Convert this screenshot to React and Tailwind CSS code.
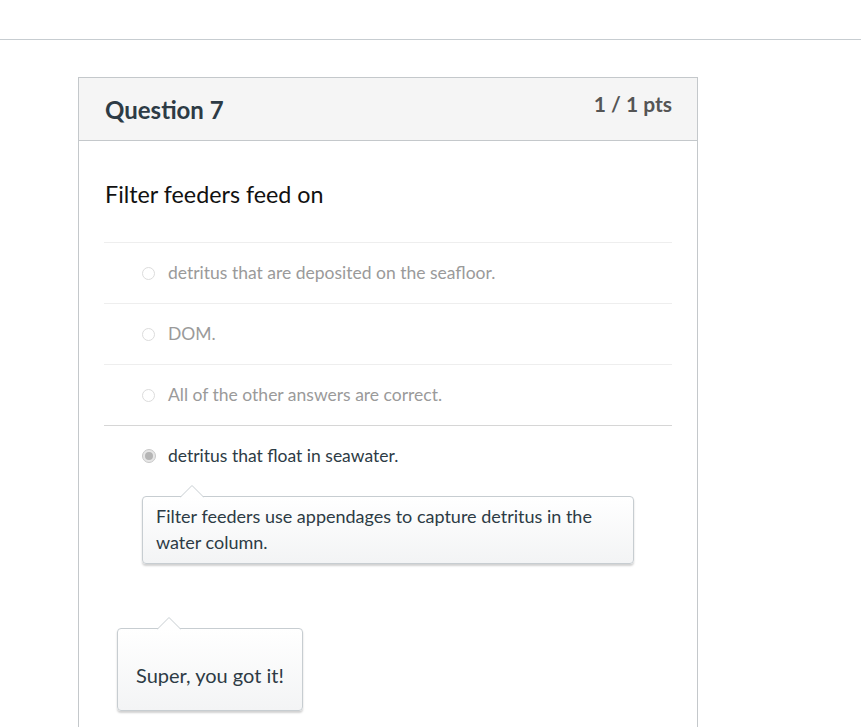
export default function App() {
  const answers = [
    { text: "detritus that are deposited on the seafloor.", selected: false },
    { text: "DOM.", selected: false },
    { text: "All of the other answers are correct.", selected: false },
  ];
  return (
    <div className="min-h-[727px] bg-white" style={{ fontFamily: "Lato, 'Noto Sans', sans-serif" }}>
      <div className="h-[40px] border-b border-[#c7cdd1]" />
      <div className="pt-[37px] pl-[78px]">
        <div className="w-[620px] border border-[#c4c8cb] border-b-0 h-[650px]">
          <div className="h-[63px] bg-[#f5f5f5] border-b border-[#c4c8cb] flex justify-between pl-[26px] pr-[25px]">
            <div className="pt-[16px] text-[24px] font-bold text-[#2d3b45] leading-[32px]">Question 7</div>
            <div className="pt-[12px] text-[21px] font-bold text-[#555] leading-[28px]">1 / 1 pts</div>
          </div>
          <div className="px-[25px]">
            <div className="pt-[38px] pb-[32px] pl-[1px] text-[23.3px] text-[#111] leading-[31px]">Filter feeders feed on</div>
            {answers.map((a, i) => (
              <div key={i} className="h-[61px] border-t border-[#eeeeee] flex items-center pl-[38px]">
                <span className="w-[13px] h-[13px] rounded-full border border-[#dcdcdc] bg-white" />
                <span className="ml-[13px] text-[17.5px] text-[#9a9a9a]">{a.text}</span>
              </div>
            ))}
            <div className="border-t border-[#d6d6d6]">
              <div className="h-[60px] flex items-center pl-[38px]">
                <span className="w-[14px] h-[14px] rounded-full border border-[#c8c8c8] bg-[#e6e6e6] flex items-center justify-center">
                  <span className="w-[8px] h-[8px] rounded-full bg-[#b5b5b5]" />
                </span>
                <span className="ml-[12px] text-[17.5px] text-[#2d3b45]">detritus that float in seawater.</span>
              </div>
              <div className="pl-[38px] pt-[10px]">
                <div className="relative w-[492px] rounded-[4px] border border-[#c7cdd1] bg-gradient-to-b from-white to-[#f3f4f5] shadow-[0_2px_2px_rgba(0,0,0,0.18)] px-[13px] pt-[6px] pb-[8px] text-[18px] leading-[26px] text-[#2d3b45]">
                  <svg className="absolute left-[37px] top-[-12px]" width="24" height="13" viewBox="0 0 24 13">
                    <path d="M0 12.5 L12 0.5 L24 12.5" fill="#ffffff" stroke="#c7cdd1" strokeWidth="1" />
                  </svg>
                  Filter feeders use appendages to capture detritus in the water column.
                </div>
              </div>
            </div>
            <div className="pt-[64px] pl-[13px]">
              <div className="relative w-[186px] h-[83px] rounded-[4px] border border-[#c7cdd1] bg-gradient-to-b from-white to-[#f3f4f5] shadow-[0_2px_2px_rgba(0,0,0,0.18)] pl-[18px] pt-[32px] text-[20px] leading-[28px] text-[#2d3b45]">
                <svg className="absolute left-[39px] top-[-12px]" width="24" height="13" viewBox="0 0 24 13">
                  <path d="M0 12.5 L12 0.5 L24 12.5" fill="#ffffff" stroke="#c7cdd1" strokeWidth="1" />
                </svg>
                Super, you got it!
              </div>
            </div>
          </div>
        </div>
      </div>
    </div>
  );
}
